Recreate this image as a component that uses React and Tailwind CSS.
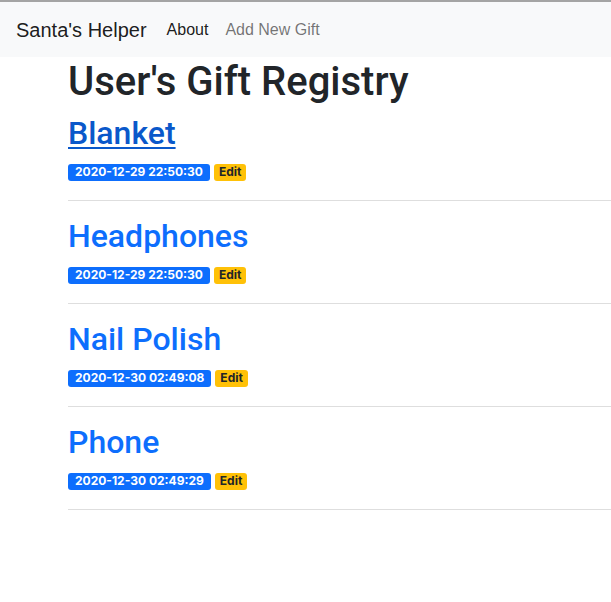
const gifts = [
  { name: "Blanket", created: "2020-12-29 22:50:30", hover: true },
  { name: "Headphones", created: "2020-12-29 22:50:30" },
  { name: "Nail Polish", created: "2020-12-30 02:49:08" },
  { name: "Phone", created: "2020-12-30 02:49:29" },
];

const Gift = ({ gift }) => {
  return (
    <div>
      <h2 className="font-['Roboto',sans-serif] text-[32px] leading-[38px] font-medium mb-2">
        <a
          href="#"
          className={
            gift.hover
              ? "text-[#0a58ca] underline underline-offset-[3px] decoration-[2px]"
              : "text-[#0d6efd]"
          }
        >
          {gift.name}
        </a>
      </h2>
      <p className="h-6 flex items-center gap-[4px] font-['Inter',sans-serif]">
        <span className="bg-[#0d6efd] text-white text-[12px] font-bold leading-none h-[17px] flex items-center px-[7px] rounded-[3px]">
          {gift.created}
        </span>
        <span className="bg-[#ffc107] text-[#212529] text-[12px] font-bold leading-none h-[17px] flex items-center px-[5px] rounded-[3px]">
          Edit
        </span>
      </p>
      <hr className="my-4 border-t border-[#dedede]" />
    </div>
  );
};

export default function App() {
  return (
    <div className="min-h-screen bg-white text-[#212529] font-['Liberation_Sans',Arial,sans-serif]">
      {/* navbar */}
      <nav className="border-t-2 border-[#a4a4a4] bg-[#f8f9fa] h-[57px] flex items-center px-4">
        <span className="text-[20px] text-black/90 mr-[20px]">Santa's Helper</span>
        <span className="text-base text-black/90 mr-[17px]">About</span>
        <span className="text-base text-black/55">Add New Gift</span>
      </nav>

      {/* registry */}
      <div className="pl-[68px] pt-px">
        <h1 className="font-['Roboto',sans-serif] text-[40px] leading-[48px] font-medium mb-2">
          User's Gift Registry
        </h1>
        {gifts.map((gift) => (
          <Gift key={gift.name} gift={gift} />
        ))}
      </div>
    </div>
  );
}
